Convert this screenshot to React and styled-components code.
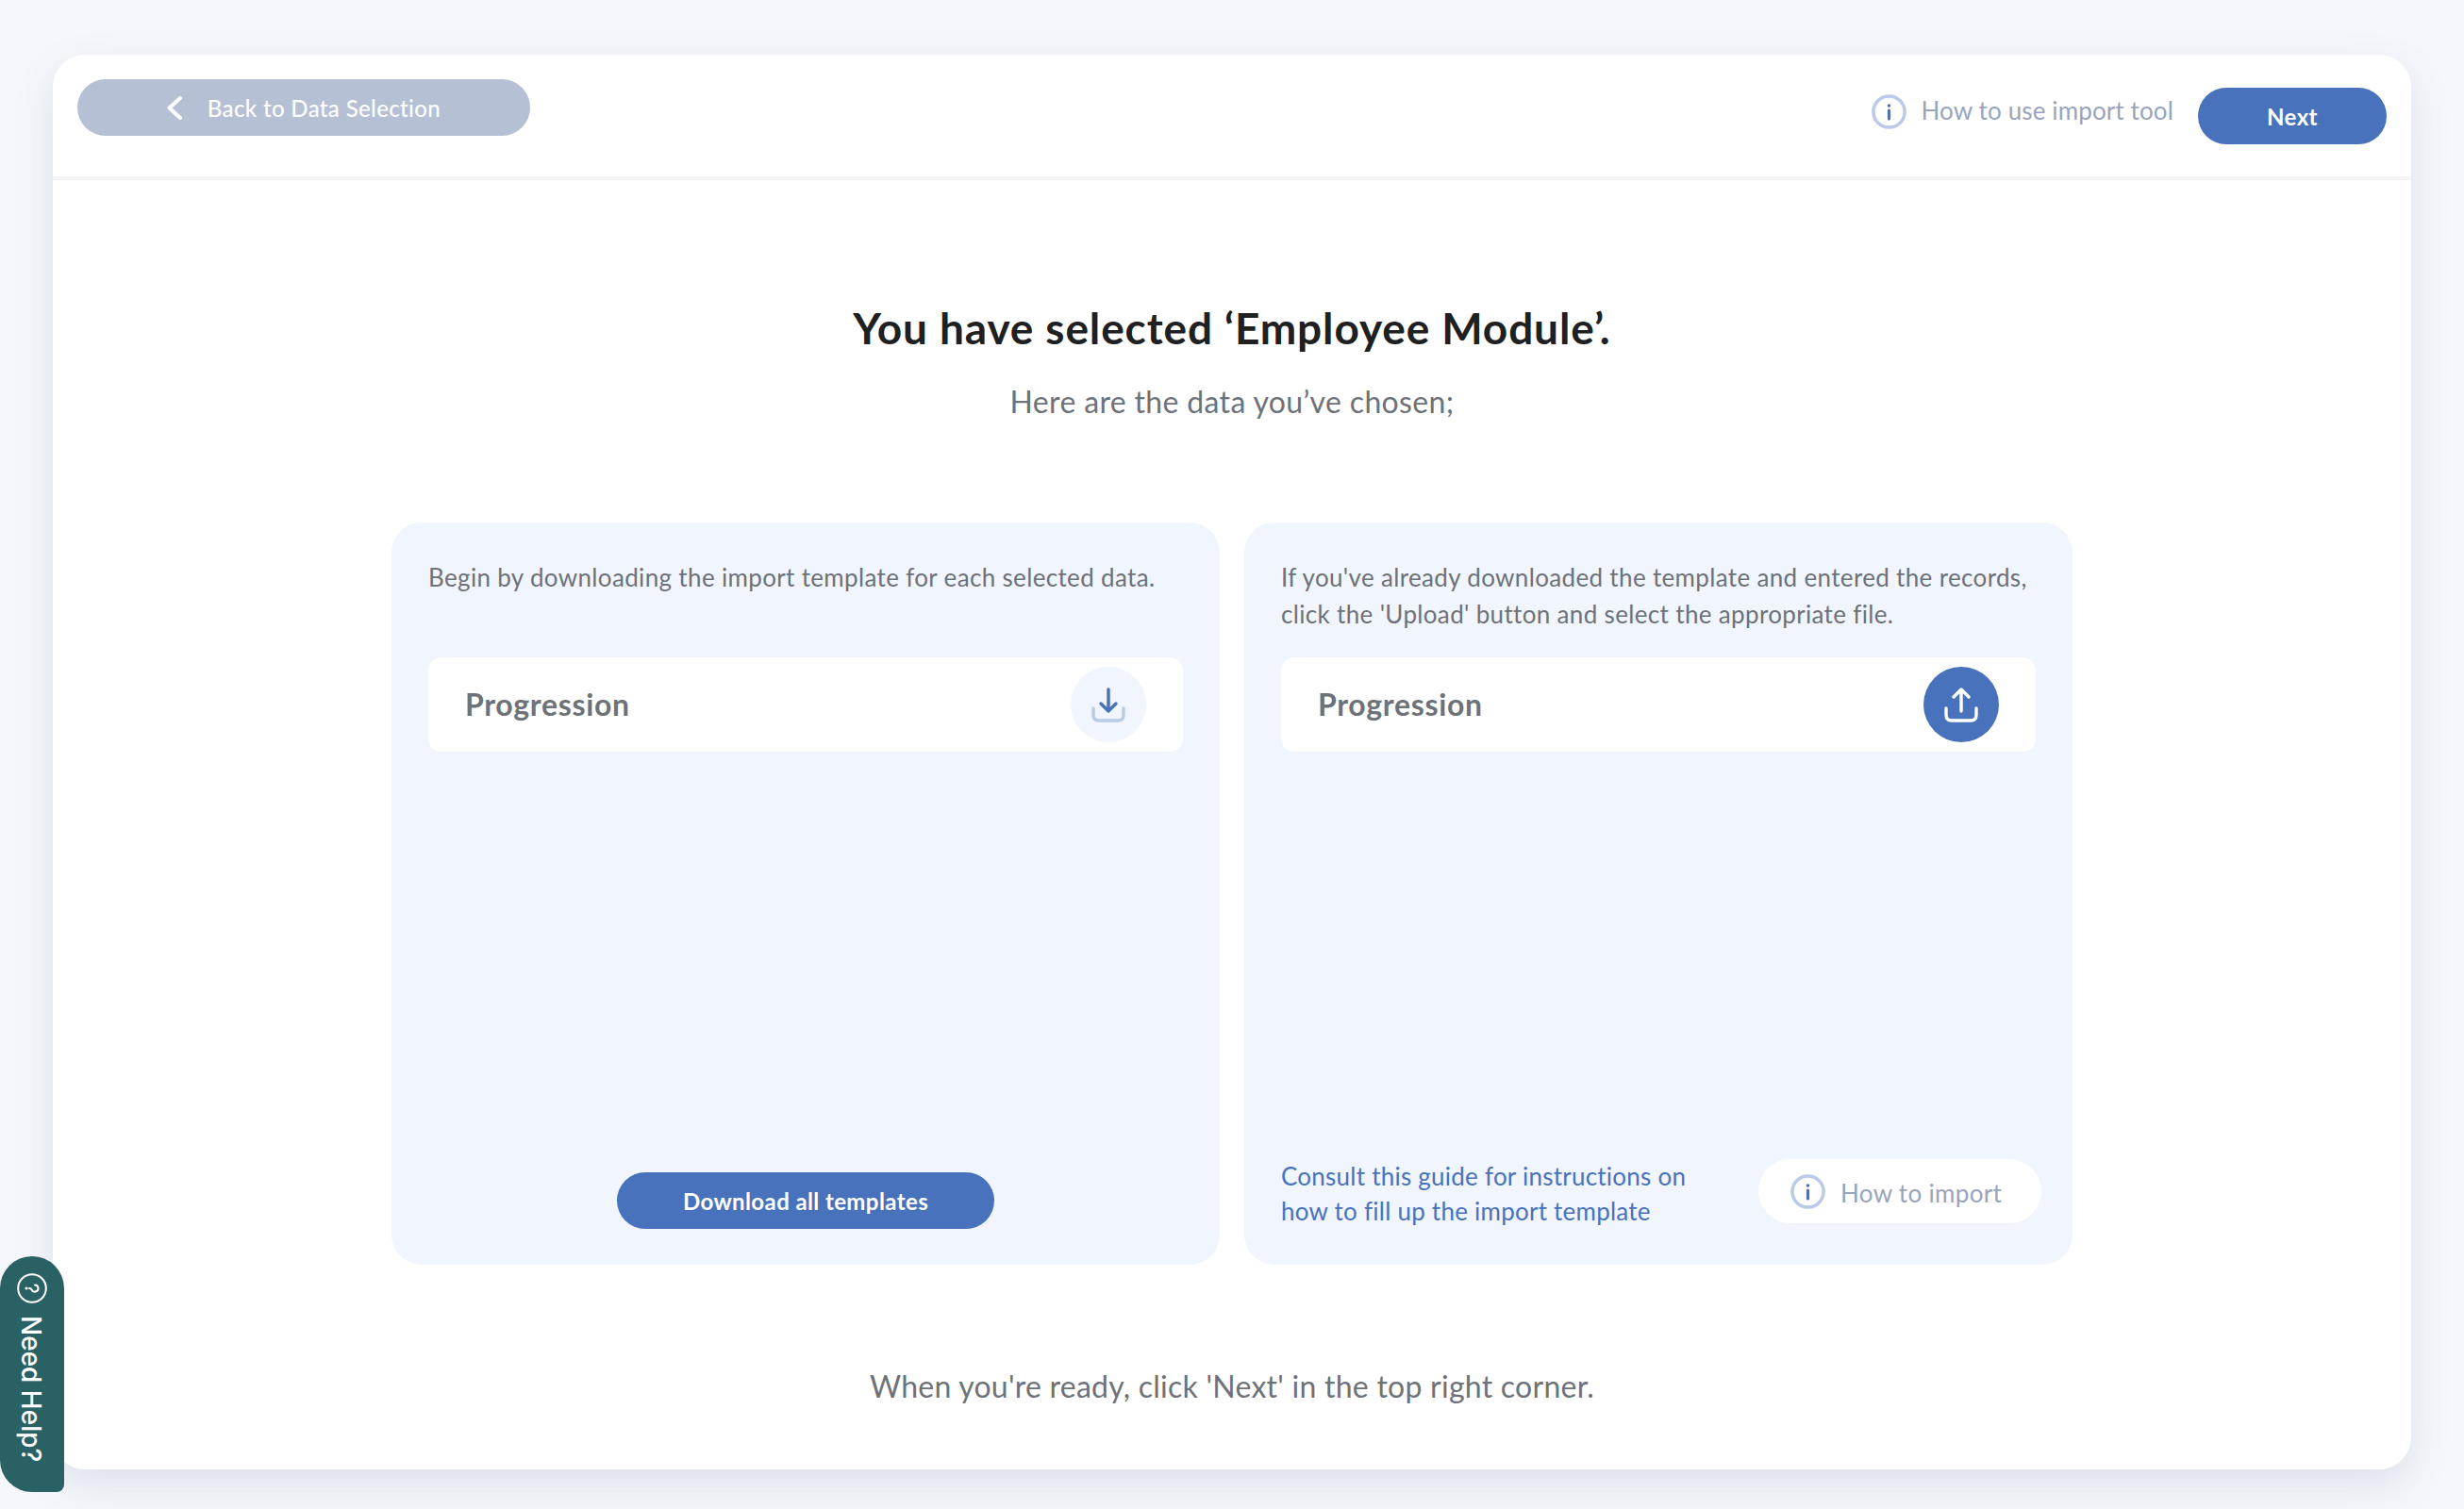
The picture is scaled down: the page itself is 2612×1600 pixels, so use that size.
import React from 'react';
import styled, { createGlobalStyle } from 'styled-components';

const GlobalStyle = createGlobalStyle`
  * { box-sizing: border-box; }
  body {
    margin: 0;
    background: #f5f7fc;
    font-family: "Lato", "Open Sans", sans-serif;
  }
`;

const Page = styled.div`
  position: relative;
  height: 1600px;
  padding: 58px 56px 42px 56px;
`;

const Card = styled.div`
  height: 1500px;
  background: #fff;
  border-radius: 34px;
  box-shadow: 0 16px 44px rgba(70, 80, 110, 0.13);
`;

const Header = styled.header`
  height: 133px;
  padding: 26px 26px 0;
  display: flex;
  align-items: flex-start;
  justify-content: space-between;
  border-bottom: 4px solid #f3f3f5;
`;

const BackButton = styled.button`
  width: 480px;
  height: 60px;
  border: 0;
  padding: 0;
  border-radius: 30px;
  background: #b5c0d5;
  color: #fff;
  font: 500 24px "Lato", sans-serif;
  letter-spacing: 0.36px;
  display: flex;
  align-items: center;
  justify-content: center;
  gap: 27px;
`;

const HeaderRight = styled.div`
  display: flex;
  align-items: flex-start;
  margin-top: 9px;
`;

const GuideLink = styled.div`
  display: flex;
  align-items: center;
  gap: 16px;
  margin: 7px 26px 0 0;
  color: #98a4bd;
  font-size: 26px;
  letter-spacing: 0.13px;
`;

const GuideLabel = styled.span`
  padding-bottom: 3px;
`;

const PrimaryButton = styled.button`
  width: ${(p) => p.$width}px;
  height: 60px;
  border: 0;
  padding: 0;
  border-radius: 30px;
  background: #4872bc;
  color: #fff;
  font: 700 24px "Lato", sans-serif;
  letter-spacing: 0.4px;
`;

const Main = styled.main`
  padding-top: 127px;
  text-align: center;
`;

const Title = styled.h1`
  margin: 0;
  color: #1e2022;
  font-size: 46px;
  line-height: 60px;
  font-weight: 700;
  letter-spacing: 0.87px;
`;

const Subtitle = styled.p`
  margin: 28px 0 0;
  color: #6d7278;
  font-size: 32px;
  line-height: 40px;
  letter-spacing: 0.34px;
`;

const Panels = styled.div`
  display: grid;
  grid-template-columns: 878px 878px;
  gap: 26px;
  justify-content: center;
  margin-top: 108px;
  text-align: left;
`;

const Panel = styled.section`
  height: 787px;
  padding: 39px 39px 38px;
  background: #f1f5fd;
  border-radius: 32px;
  display: flex;
  flex-direction: column;
`;

const Intro = styled.p`
  margin: 0 0 26px;
  min-height: 78px;
  color: #6d7278;
  font-size: 26px;
  line-height: 39px;
  letter-spacing: 0.34px;
`;

const DataRow = styled.div`
  height: 100px;
  padding: 0 39px;
  background: #fff;
  border-radius: 14px;
  display: flex;
  align-items: center;
  justify-content: space-between;
`;

const DataName = styled.span`
  padding-bottom: 2px;
  color: #6d7278;
  font-size: 32px;
  font-weight: 700;
  letter-spacing: 0.66px;
`;

const RoundAction = styled.button`
  width: 80px;
  height: 80px;
  border: 0;
  padding: 0;
  border-radius: 50%;
  background: ${(p) => (p.$solid ? '#4872bc' : '#f1f5fd')};
  display: flex;
  align-items: center;
  justify-content: center;
`;

const PanelFooter = styled.div`
  margin-top: auto;
  display: flex;
  justify-content: ${(p) => (p.$center ? 'center' : 'space-between')};
  align-items: flex-start;
  margin-right: ${(p) => (p.$center ? 0 : -6)}px;
`;

const GuideNote = styled.p`
  margin: 0;
  color: #4872bc;
  font-size: 26px;
  line-height: 37px;
  letter-spacing: 0.24px;
`;

const HowToPill = styled.div`
  width: 300px;
  height: 68px;
  padding-left: 34px;
  background: #fff;
  border-radius: 34px;
  display: flex;
  align-items: center;
  gap: 16px;
  color: #98a4bd;
  font-size: 26px;
  letter-spacing: 0.33px;
`;

const PillLabel = styled.span`
  padding-top: 3px;
`;

const ReadyNote = styled.p`
  margin: 109px 0 0;
  color: #6d7278;
  font-size: 32px;
  line-height: 40px;
  letter-spacing: 0.25px;
`;

const HelpTab = styled.aside`
  position: absolute;
  left: 0;
  top: 1332px;
  width: 68px;
  height: 250px;
  padding-top: 18px;
  background: #2a6165;
  border-radius: 34px 34px 8px 34px;
  color: #fff;
  display: flex;
  flex-direction: column;
  align-items: center;
  gap: 13px;
`;

const HelpLabel = styled.span`
  writing-mode: vertical-rl;
  font: 500 28px/32px "Inter", sans-serif;
  margin-right: 2px;
`;

const ChevronIcon = () => (
  <svg width="16" height="25" viewBox="0 0 16 25" fill="none" stroke="#fff" strokeWidth="4" strokeLinecap="round" strokeLinejoin="round">
    <path d="M14 2 L2.5 12.5 L14 23" />
  </svg>
);

const InfoIcon = ({ size }) => (
  <svg width={size} height={size} viewBox="0 0 37 37" fill="none">
    <circle cx="18.5" cy="18.5" r="16.6" stroke="#b9cbe9" strokeWidth="3.5" />
    <circle cx="18.5" cy="12" r="1.8" fill="#4872bc" />
    <path d="M18.5 17 V26" stroke="#4872bc" strokeWidth="3.2" strokeLinecap="round" />
  </svg>
);

const DownloadIcon = () => (
  <svg width="36" height="37" viewBox="0 0 36 37" fill="none" strokeWidth="3.4" strokeLinecap="round" strokeLinejoin="round">
    <path d="M2 22 V29 Q2 35 8 35 H28 Q34 35 34 29 V22" stroke="#b9cbe9" />
    <path d="M18 2 V25 M10 17 L18 25 L26 17" stroke="#4872bc" />
  </svg>
);

const UploadIcon = () => (
  <svg width="36" height="37" viewBox="0 0 36 37" fill="none" stroke="#fff" strokeWidth="3.4" strokeLinecap="round" strokeLinejoin="round">
    <path d="M2 22 V29 Q2 35 8 35 H28 Q34 35 34 29 V22" />
    <path d="M18 25 V2 M10 10 L18 2 L26 10" />
  </svg>
);

const HelpIcon = () => (
  <svg width="32" height="32" viewBox="0 0 32 32" fill="none" stroke="#fff" strokeWidth="2" strokeLinecap="round">
    <circle cx="16" cy="16" r="14.8" />
    <g transform="rotate(90 16 16)">
      <path d="M12.5 13 A3.6 3.6 0 1 1 17.5 16.4 Q16 17.2 16 19" />
      <circle cx="16" cy="22" r="0.6" />
    </g>
  </svg>
);

const App = () => (
  <Page>
    <GlobalStyle />
    <Card>
      <Header>
        <BackButton>
          <ChevronIcon />
          Back to Data Selection
        </BackButton>
        <HeaderRight>
          <GuideLink>
            <InfoIcon size={37} />
            <GuideLabel>How to use import tool</GuideLabel>
          </GuideLink>
          <PrimaryButton $width={200}>Next</PrimaryButton>
        </HeaderRight>
      </Header>
      <Main>
        <Title>You have selected ‘Employee Module’.</Title>
        <Subtitle>Here are the data you’ve chosen;</Subtitle>
        <Panels>
          <Panel>
            <Intro>Begin by downloading the import template for each selected data.</Intro>
            <DataRow>
              <DataName>Progression</DataName>
              <RoundAction><DownloadIcon /></RoundAction>
            </DataRow>
            <PanelFooter $center>
              <PrimaryButton $width={400}>Download all templates</PrimaryButton>
            </PanelFooter>
          </Panel>
          <Panel>
            <Intro>
              If you've already downloaded the template and entered the records,
              <br />
              click the 'Upload' button and select the appropriate file.
            </Intro>
            <DataRow>
              <DataName>Progression</DataName>
              <RoundAction $solid><UploadIcon /></RoundAction>
            </DataRow>
            <PanelFooter>
              <GuideNote>
                Consult this guide for instructions on
                <br />
                how to fill up the import template
              </GuideNote>
              <HowToPill>
                <InfoIcon size={37} />
                <PillLabel>How to import</PillLabel>
              </HowToPill>
            </PanelFooter>
          </Panel>
        </Panels>
        <ReadyNote>When you're ready, click 'Next' in the top right corner.</ReadyNote>
      </Main>
    </Card>
    <HelpTab>
      <HelpIcon />
      <HelpLabel>Need Help?</HelpLabel>
    </HelpTab>
  </Page>
);

export default App;
